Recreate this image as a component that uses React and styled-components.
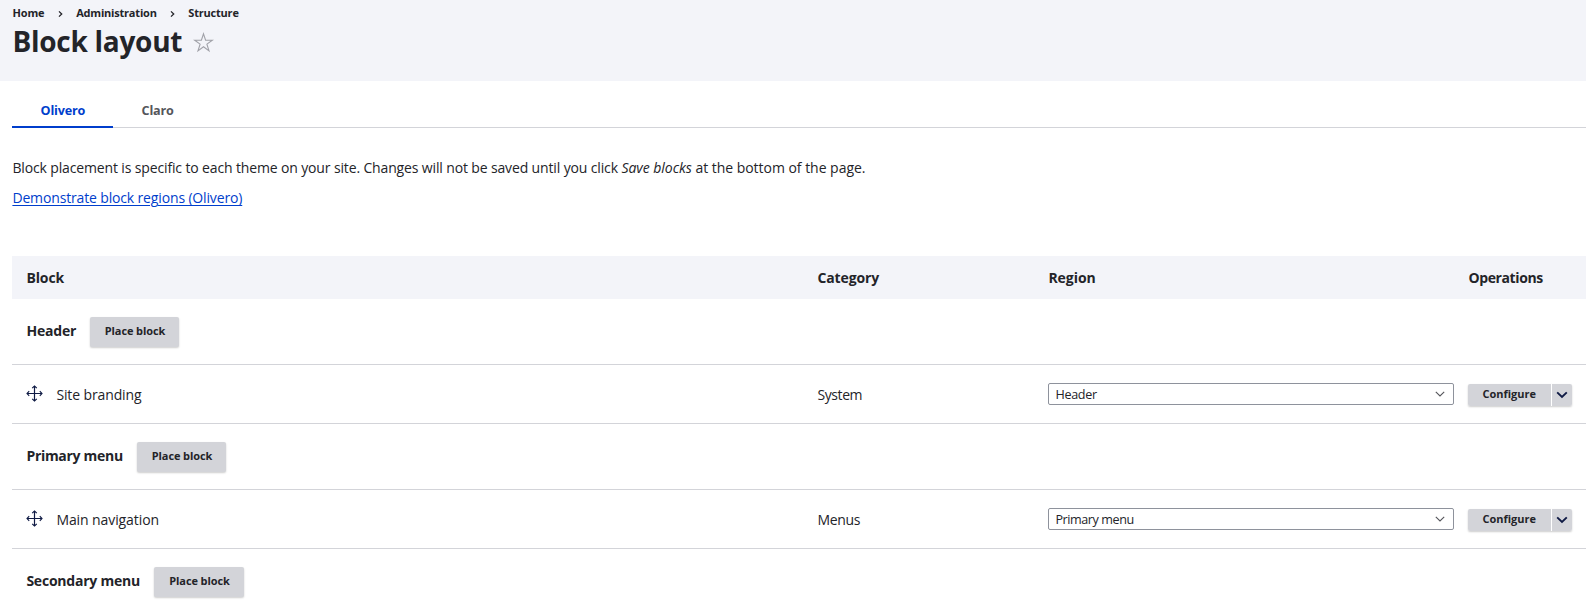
import React from 'react';
import styled, { createGlobalStyle } from 'styled-components';

const GlobalStyle = createGlobalStyle`
  *, *::before, *::after { box-sizing: border-box; }
  body {
    margin: 0;
    background: #fff;
    color: #232429;
    font-family: "Open Sans", "Noto Sans", sans-serif;
    font-size: 14px;
    overflow: hidden;
  }
`;

const Page = styled.div`
  height: 605px;
  overflow: hidden;
`;

const PageHeader = styled.header`
  height: 81px;
  padding: 4px 12px 0 12.4px;
  background: #f3f4f9;
`;

const Breadcrumb = styled.nav`
  display: flex;
  align-items: center;
  height: 18px;
`;

const Crumb = styled.a`
  font-size: 11px;
  line-height: 18px;
  font-weight: 700;
  letter-spacing: ${(p) => p.$spacing || 0}px;
  white-space: nowrap;
`;

const CrumbArrow = styled.svg`
  display: block;
  width: 5px;
  height: 8px;
  margin: 1px 13.3px 0;
`;

const TitleRow = styled.div`
  display: flex;
  align-items: center;
  height: 38px;
`;

const Title = styled.h1`
  margin: 0;
  font-size: 28px;
  line-height: 38px;
  font-weight: 700;
  letter-spacing: -0.27px;
`;

const Star = styled.svg`
  display: block;
  width: 21px;
  height: 21px;
  margin: 2px 0 0 11px;
`;

const Tabs = styled.nav`
  display: flex;
  height: 47px;
  margin: 0 0 0 12px;
  padding-top: 5px;
  box-shadow: inset 0 -1px 0 #d3d4d9;
`;

const Tab = styled.a`
  padding: 1px 28.6px 0;
  width: ${(p) => p.$width}px;
  font-size: 12.6px;
  line-height: 48px;
  font-weight: 700;
  letter-spacing: -0.2px;
  white-space: nowrap;
  color: ${(p) => (p.$active ? '#003ecc' : '#55565b')};
  border-bottom: ${(p) => (p.$active ? '2px solid #003ecc' : 'none')};
`;

const Intro = styled.section`
  height: 128px;
  padding: 29px 12px 0 12.4px;
`;

const Paragraph = styled.p`
  margin: 0 0 9px;
  line-height: 21px;
  letter-spacing: -0.14px;
  white-space: nowrap;
`;

const ParagraphEnd = styled.span`
  letter-spacing: -0.03px;
`;

const DemoLink = styled.a`
  display: inline-block;
  line-height: 21px;
  color: #003ecc;
  letter-spacing: -0.15px;
  text-decoration: underline;
  text-decoration-thickness: 1px;
  text-underline-offset: 2px;
`;

const Table = styled.div`
  margin-left: 12px;
`;

const Row = styled.div`
  display: grid;
  grid-template-columns: 791px 231px 420px 132px;
  align-items: center;
  height: ${(p) => p.$height}px;
  background: ${(p) => (p.$head ? '#f3f4f9' : 'transparent')};
  border-bottom: ${(p) => (p.$head ? 'none' : '1px solid #d3d4d9')};
`;

const RegionRow = styled.div`
  display: flex;
  align-items: flex-start;
  height: 66px;
  padding: 18px 14px 0;
  border-bottom: 1px solid #d3d4d9;
`;

const Cell = styled.div`
  display: flex;
  align-items: center;
  padding: 0 14px;
`;

const Label = styled.span`
  padding: 2px 0 0 0.4px;
  line-height: 22px;
  font-weight: ${(p) => (p.$bold ? 700 : 400)};
  letter-spacing: ${(p) => p.$spacing || 0}px;
  white-space: nowrap;
`;

const HeadLabel = styled(Label)`
  padding-top: 1px;
`;

const RegionTitle = styled(Label)`
  width: ${(p) => p.$width}px;
  padding-top: 3px;
`;

const PlaceButton = styled.button`
  height: 30px;
  padding: 0 0 2px 1px;
  width: ${(p) => p.$width || 89}px;
  border: 0;
  border-radius: 2px;
  background: #d3d4d9;
  box-shadow: 0 1px 2px rgba(0, 0, 0, 0.2);
  color: #232429;
  font: 700 11px/28px "Open Sans", "Noto Sans", sans-serif;
  letter-spacing: -0.1px;
`;

const DragIcon = styled.svg`
  display: block;
  flex: none;
  width: 17px;
  height: 17px;
  margin: -1px 13px 0 0;
`;

const Select = styled.div`
  display: flex;
  flex: none;
  align-items: center;
  justify-content: space-between;
  width: 406px;
  height: 22px;
  padding: 0 8px 0 6px;
  border: 1px solid #8e929c;
  border-radius: 2px;
  background: #fff;
  font-size: 12.6px;
`;

const SelectArrow = styled.svg`
  display: block;
  width: 10px;
  height: 6px;
  margin-top: -1px;
`;

const DropButton = styled.div`
  display: flex;
  gap: 1px;
  width: 104px;
  height: 22px;
  margin-top: 1px;
  border-radius: 2px;
  box-shadow: 0 1px 2px rgba(0, 0, 0, 0.2);
  background: #fff;
`;

const DropAction = styled.button`
  width: 83px;
  padding: 0 0 1px 14.4px;
  border: 0;
  border-radius: 2px 0 0 2px;
  background: #d3d4d9;
  color: #232429;
  font: 700 11px/20px "Open Sans", "Noto Sans", sans-serif;
  text-align: left;
`;

const DropToggle = styled.button`
  display: flex;
  align-items: center;
  justify-content: center;
  width: 20px;
  padding: 0;
  border: 0;
  border-radius: 0 2px 2px 0;
  background: #d3d4d9;
`;

const Separator = () => (
  <CrumbArrow viewBox="0 0 5 8">
    <path d="M1 1.4 3.7 4 1 6.6" fill="none" stroke="#232429" strokeWidth="1.3" />
  </CrumbArrow>
);

const Handle = () => (
  <DragIcon viewBox="0 0 17 17" fill="none" stroke="#0f1a44" strokeWidth="1.1">
    <path d="M8.5 1.3v14.4M1.3 8.5h14.4" strokeWidth="1.2" />
    <path d="M6.2 3.2 8.5 1l2.3 2.2M6.2 13.8 8.5 16l2.3-2.2M3.2 6.2 1 8.5l2.2 2.3M13.8 6.2 16 8.5l-2.2 2.3" />
  </DragIcon>
);

const Region = ({ name, width, spacing, buttonWidth }) => (
  <RegionRow>
    <RegionTitle $bold $width={width} $spacing={spacing}>{name}</RegionTitle>
    <PlaceButton $width={buttonWidth}>Place block</PlaceButton>
  </RegionRow>
);

const Block = ({ name, category, region }) => (
  <Row $height={59}>
    <Cell>
      <Handle />
      <Label $spacing={name.spacing}>{name.text}</Label>
    </Cell>
    <Cell><Label $spacing={category.spacing}>{category.text}</Label></Cell>
    <Cell>
      <Select>
        <Label $spacing={region.spacing}>{region.text}</Label>
        <SelectArrow viewBox="0 0 10 6">
          <path d="M.8.8 5 5 9.2.8" fill="none" stroke="#55565b" strokeWidth="1.1" />
        </SelectArrow>
      </Select>
    </Cell>
    <Cell>
      <DropButton>
        <DropAction>Configure</DropAction>
        <DropToggle aria-label="List additional actions">
          <svg width="12" height="8" viewBox="0 0 12 8">
            <path d="M1.2 1.4 6 6l4.8-4.6" fill="none" stroke="#0f1a44" strokeWidth="1.9" />
          </svg>
        </DropToggle>
      </DropButton>
    </Cell>
  </Row>
);

export default function App() {
  return (
    <Page>
      <GlobalStyle />
      <PageHeader>
        <Breadcrumb>
          <Crumb $spacing={-0.1}>Home</Crumb>
          <Separator />
          <Crumb $spacing={-0.2}>Administration</Crumb>
          <Separator />
          <Crumb $spacing={-0.2}>Structure</Crumb>
        </Breadcrumb>
        <TitleRow>
          <Title>Block layout</Title>
          <Star viewBox="0 0 21 21">
            <path
              d="M10.5 1.8 12.6 8.2H19.3L13.9 12.1 16 18.9 10.5 14.8 5 18.9 7.1 12.1 1.7 8.2H8.4Z"
              fill="none"
              stroke="#a0a1a8"
              strokeWidth="1.1"
            />
          </Star>
        </TitleRow>
      </PageHeader>
      <Tabs>
        <Tab $active $width={101}>Olivero</Tab>
        <Tab $width={90}>Claro</Tab>
      </Tabs>
      <Intro>
        <Paragraph>
          Block placement is specific to each theme on your site. Changes will not be saved until you click{' '}
          <ParagraphEnd>
            <em>Save blocks</em> at the bottom of the page.
          </ParagraphEnd>
        </Paragraph>
        <DemoLink>Demonstrate block regions (Olivero)</DemoLink>
      </Intro>
      <Table>
        <Row $head $height={43}>
          <Cell><HeadLabel $bold $spacing={-0.1}>Block</HeadLabel></Cell>
          <Cell><HeadLabel $bold $spacing={-0.12}>Category</HeadLabel></Cell>
          <Cell><HeadLabel $bold $spacing={-0.05}>Region</HeadLabel></Cell>
          <Cell><HeadLabel $bold $spacing={-0.38}>Operations</HeadLabel></Cell>
        </Row>
        <Region name="Header" width={64} spacing={-0.2} />
        <Block
          name={{ text: 'Site branding', spacing: -0.12 }}
          category={{ text: 'System', spacing: -0.4 }}
          region={{ text: 'Header', spacing: -0.3 }}
        />
        <Region name="Primary menu" width={111} spacing={-0.3} />
        <Block
          name={{ text: 'Main navigation', spacing: -0.09 }}
          category={{ text: 'Menus', spacing: -0.3 }}
          region={{ text: 'Primary menu', spacing: -0.42 }}
        />
        <Region name="Secondary menu" width={128} spacing={-0.23} buttonWidth={90} />
      </Table>
    </Page>
  );
}
